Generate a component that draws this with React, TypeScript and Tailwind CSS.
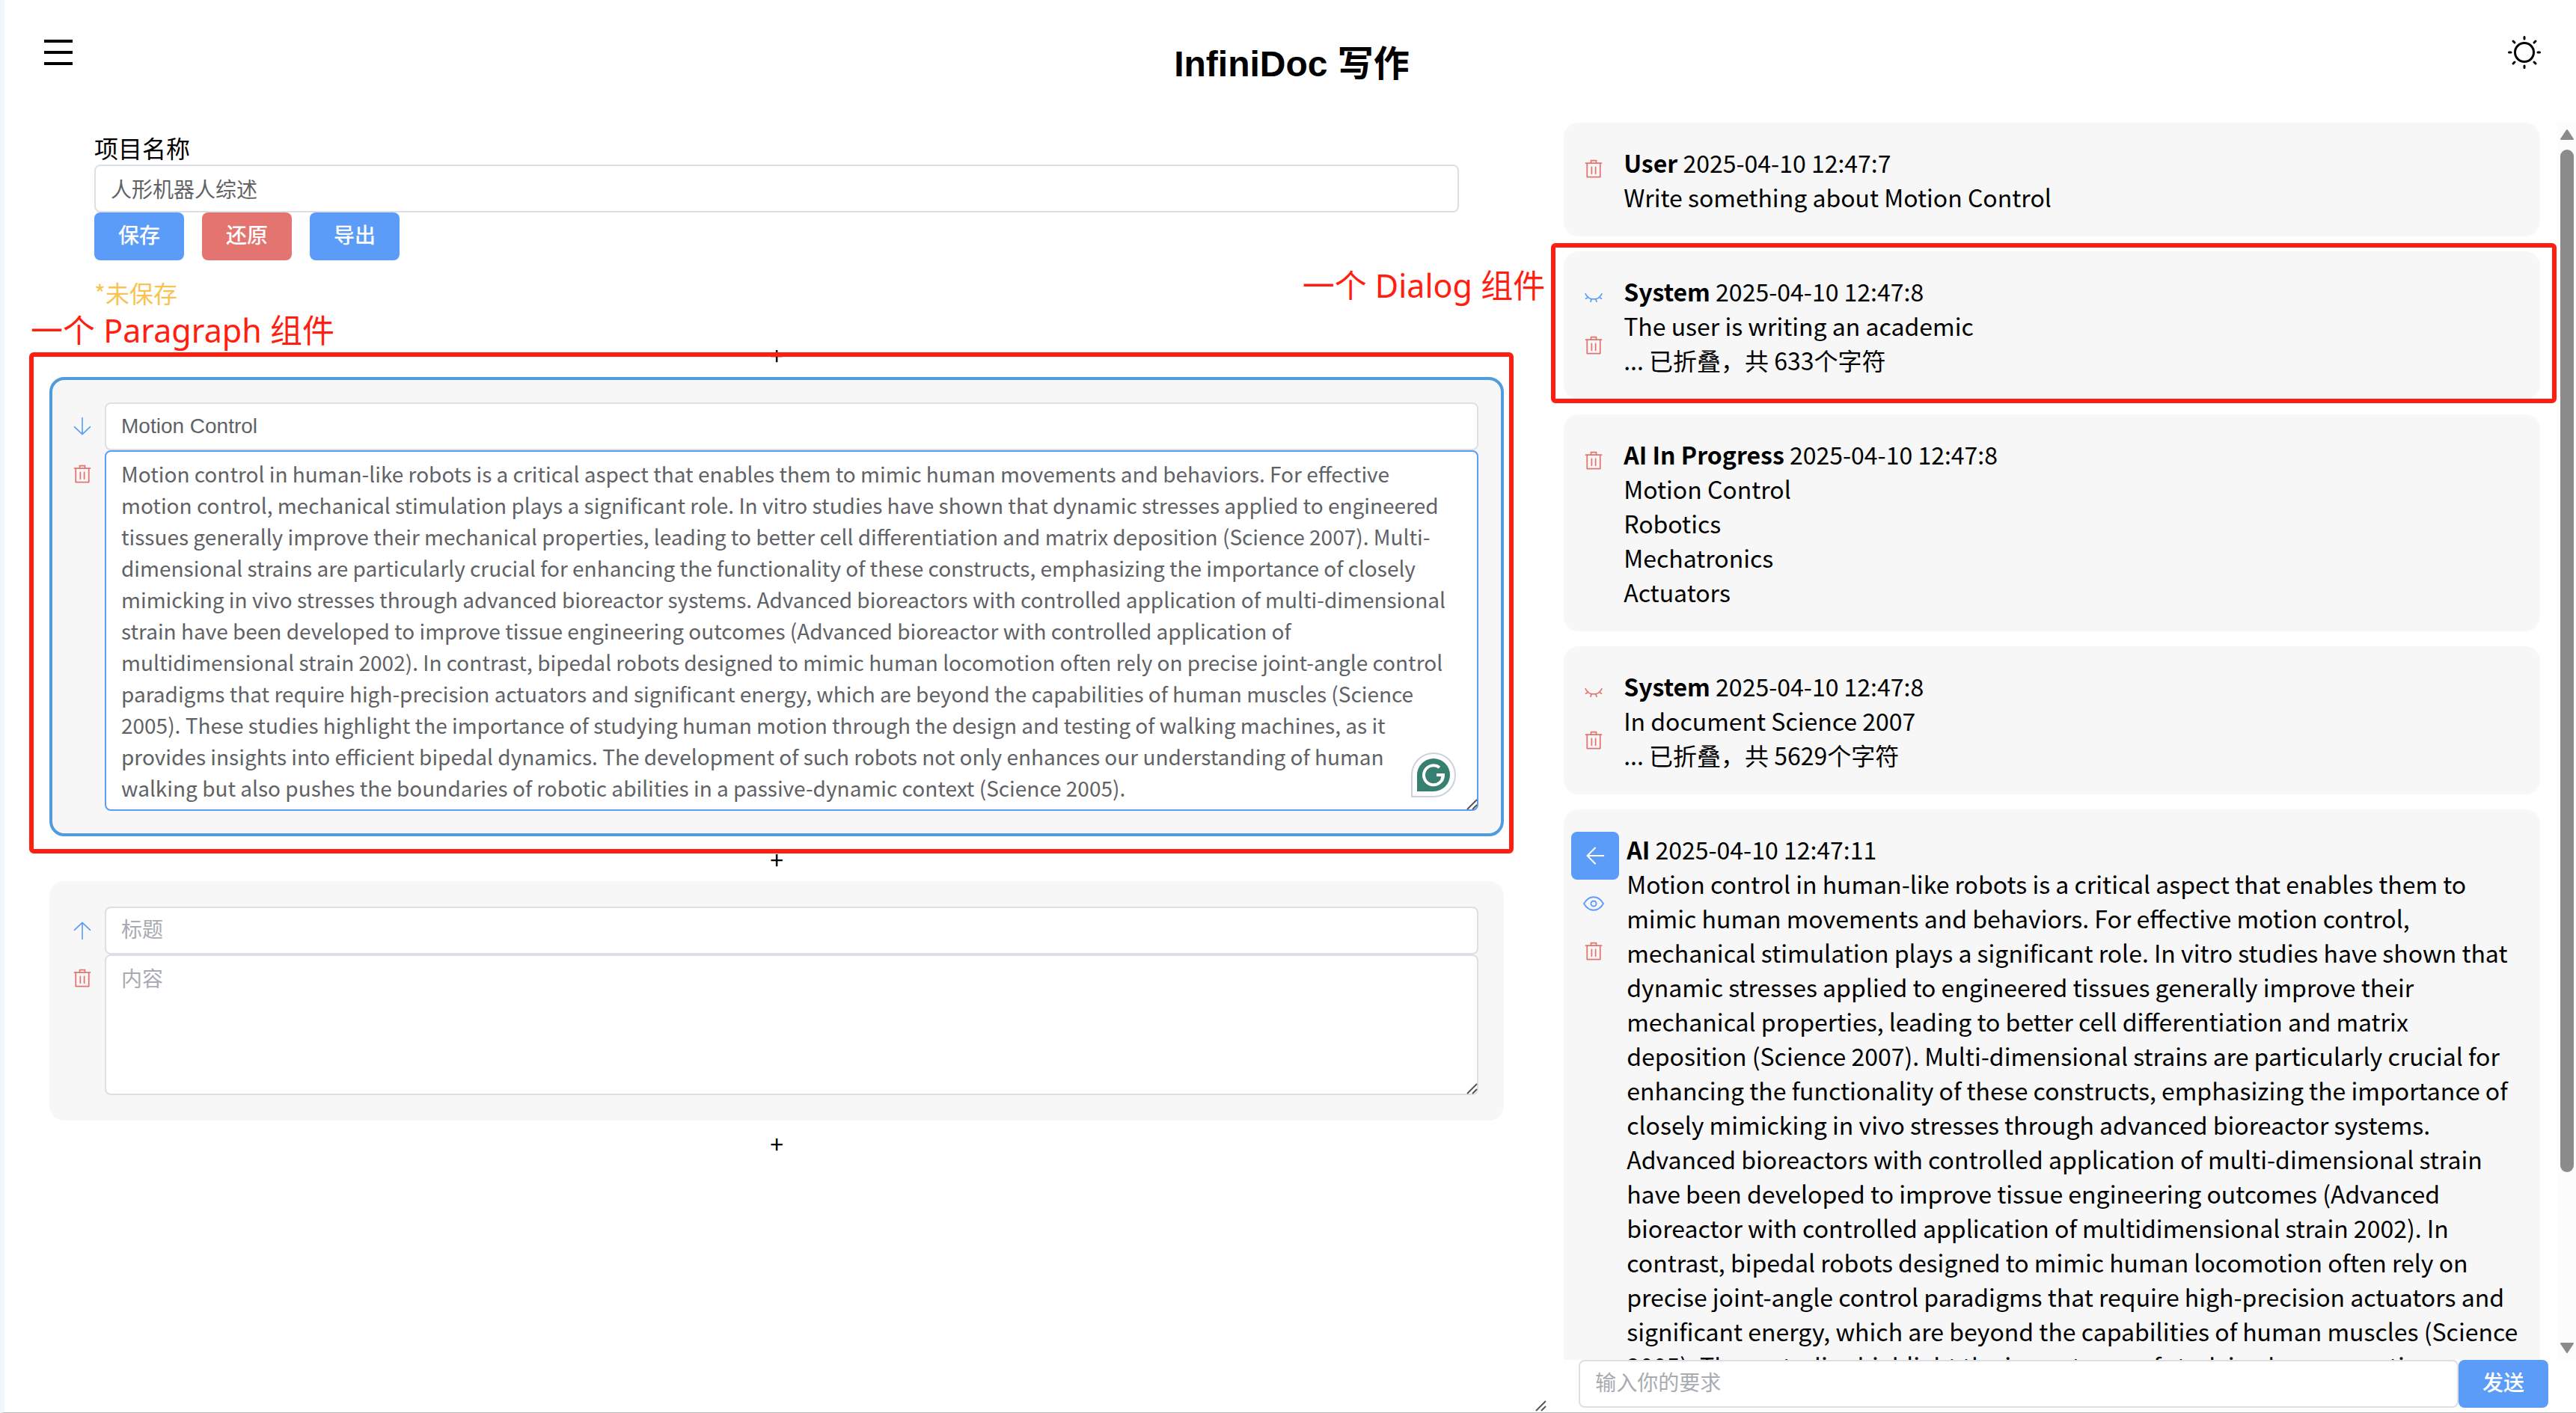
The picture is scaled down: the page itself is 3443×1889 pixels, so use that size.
import type { ReactNode } from "react";

const CONTENT =
  "Motion control in human-like robots is a critical aspect that enables them to mimic human movements and behaviors. For effective motion control, mechanical stimulation plays a significant role. In vitro studies have shown that dynamic stresses applied to engineered tissues generally improve their mechanical properties, leading to better cell differentiation and matrix deposition (Science 2007). Multi-dimensional strains are particularly crucial for enhancing the functionality of these constructs, emphasizing the importance of closely mimicking in vivo stresses through advanced bioreactor systems. Advanced bioreactors with controlled application of multi-dimensional strain have been developed to improve tissue engineering outcomes (Advanced bioreactor with controlled application of multidimensional strain 2002). In contrast, bipedal robots designed to mimic human locomotion often rely on precise joint-angle control paradigms that require high-precision actuators and significant energy, which are beyond the capabilities of human muscles (Science 2005). These studies highlight the importance of studying human motion through the design and testing of walking machines, as it provides insights into efficient bipedal dynamics. The development of such robots not only enhances our understanding of human walking but also pushes the boundaries of robotic abilities in a passive-dynamic context (Science 2005).";

const UI_FONT = "font-['Liberation_Sans','Noto_Sans_CJK_SC',sans-serif]";

function Stroke({ children, width = 64 }: { children: ReactNode; width?: number }) {
  return (
    <svg
      viewBox="0 0 1024 1024"
      className="size-7"
      fill="none"
      stroke="currentColor"
      strokeWidth={width}
      strokeLinecap="round"
      strokeLinejoin="round"
      aria-hidden="true"
    >
      {children}
    </svg>
  );
}

const TrashIcon = () => (
  <Stroke>
    <path d="M128 224H896M192 224V896H832V224M384 224V96H640V224M416 416V736M608 416V736" />
  </Stroke>
);
const DownIcon = () => (
  <Stroke width={60}>
    <path d="M512 96V896M128 532L512 900L896 532" />
  </Stroke>
);
const UpIcon = () => (
  <Stroke width={60}>
    <path d="M512 928V128M128 492L512 124L896 492" />
  </Stroke>
);
const BackIcon = () => (
  <Stroke width={72}>
    <path d="M128 512H928M512 128L128 512L512 896" />
  </Stroke>
);
const ViewIcon = () => (
  <Stroke width={68}>
    <path d="M36 512C150 320 310 192 512 192S874 320 988 512C874 704 714 832 512 832S150 704 36 512Z" />
    <circle cx="512" cy="512" r="130" />
  </Stroke>
);
const HideIcon = () => (
  <Stroke width={64}>
    <path d="M112 320C190 490 330 585 512 585S834 490 912 320M245 480L130 560M779 480L894 560M405 580L365 705M619 580L659 705" />
  </Stroke>
);
const Grip = () => (
  <svg viewBox="0 0 18 18" className="size-[18px]" stroke="#55575b" strokeWidth="2" aria-hidden="true">
    <path d="M3 16L16 3M10 16L16 10" />
  </svg>
);

function IconButton({ label, tone, children }: { label: string; tone: "blue" | "red"; children: ReactNode }) {
  return (
    <button
      type="button"
      aria-label={label}
      className={`flex h-16 w-[60px] items-center justify-center ${tone === "blue" ? "text-[#5a9cf8]" : "text-[#e3746f]"}`}
    >
      {children}
    </button>
  );
}

function Button({ children, danger = false }: { children: ReactNode; danger?: boolean }) {
  return (
    <button
      type="button"
      className={`flex h-16 w-[120px] shrink-0 items-center justify-center rounded-lg text-[28px] font-medium text-white ${danger ? "bg-[#e3746f]" : "bg-[#5a9cf8]"} ${UI_FONT}`}
    >
      {children}
    </button>
  );
}

const FIELD =
  "block w-full rounded-lg border-2 bg-white px-5 text-[28px] text-[#606266] placeholder:text-[#a8abb2] outline-none";

function Plus() {
  return (
    <button type="button" aria-label="添加段落" className="flex h-[60px] w-full items-center justify-center text-[32px] leading-[46px]">
      +
    </button>
  );
}

function Paragraph({
  title,
  content,
  rows,
  active = false,
  children,
}: {
  title: string;
  content: string;
  rows: number;
  active?: boolean;
  children?: ReactNode;
}) {
  return (
    <section className="relative">
      <div
        className={`flex rounded-[20px] border-4 bg-[#f7f7f7] py-[30px] pr-[30px] pl-[10px] ${active ? "border-[#4f9ddd]" : "border-[#f7f7f7]"}`}
      >
        <div className="flex flex-col">
          {active ? (
            <IconButton label="下移" tone="blue">
              <DownIcon />
            </IconButton>
          ) : (
            <IconButton label="上移" tone="blue">
              <UpIcon />
            </IconButton>
          )}
          <IconButton label="删除段落" tone="red">
            <TrashIcon />
          </IconButton>
        </div>
        <div className="min-w-0 grow">
          <input aria-label="标题" placeholder="标题" defaultValue={title} className={`${FIELD} h-16 border-[#dcdfe6] ${UI_FONT}`} />
          <div className="relative">
            <textarea
              aria-label="内容"
              placeholder="内容"
              rows={rows}
              defaultValue={content}
              className={`${FIELD} resize-none overflow-hidden py-2 leading-[42px] ${active ? "border-[#5a9cf8]" : "border-[#dcdfe6]"}`}
            />
            <span className="absolute right-0 bottom-0">
              <Grip />
            </span>
            {active && (
              <svg viewBox="0 0 60 60" className="absolute right-[30px] bottom-[18px] size-[60px]" aria-hidden="true">
                <path d="M1 59V30A29 29 0 1 1 30 59Z" fill="#fff" stroke="#cfd0dc" strokeWidth="2" />
                <path d="M8 52V30A22 22 0 1 1 30 52Z" fill="#377f70" />
                <path d="M38 20A13 13 0 1 0 43 30H34M43 30L41 37" fill="none" stroke="#fff" strokeWidth="4" />
              </svg>
            )}
          </div>
        </div>
      </div>
      {children}
    </section>
  );
}

function Dialog({
  who,
  time,
  lines,
  actions,
  children,
}: {
  who: string;
  time: string;
  lines: string[];
  actions: ReactNode;
  children?: ReactNode;
}) {
  return (
    <article className="relative flex items-start gap-[10px] rounded-[20px] bg-[#f7f7f7] py-[30px] pr-7 pl-[10px]">
      <div className="flex shrink-0 flex-col">{actions}</div>
      <div className="min-w-0">
        <p>
          <b>{who}</b> {time}
        </p>
        {lines.map((line) => (
          <p key={line}>{line}</p>
        ))}
      </div>
      {children}
    </article>
  );
}

const Trash = () => (
  <IconButton label="删除对话" tone="red">
    <TrashIcon />
  </IconButton>
);

export default function App() {
  return (
    <div className="flex h-screen flex-col overflow-hidden border-b border-l-[6px] border-b-[#b8b8b8] border-l-[#f3f7fb] bg-white font-['Noto_Sans_CJK_SC',sans-serif] text-[32px] leading-[46px] text-black">
      <header className="grid h-[164px] shrink-0 grid-cols-[1fr_auto_1fr] items-start pt-12 pl-1">
        <button type="button" aria-label="菜单" className="ml-[46px] flex size-11 items-center justify-center">
          <svg viewBox="0 0 38 34" className="h-[34px] w-[38px]" stroke="#000" strokeWidth="4" aria-hidden="true">
            <path d="M0 2H38M0 17H38M0 32H38" />
          </svg>
        </button>
        <h1 className={`text-[48px] leading-[76px] font-bold ${UI_FONT}`}>InfiniDoc 写作</h1>
        <button type="button" aria-label="切换主题" className="mr-[47px] flex size-11 items-center justify-center justify-self-end">
          <svg viewBox="0 0 44 44" className="size-11" fill="none" stroke="#000" strokeWidth="3" strokeLinecap="round" aria-hidden="true">
            <circle cx="22" cy="22" r="12.5" />
            <path d="M22 1.500V4M22 40V42.500M1.500 22H4M40 22H42.500M7 7L9 9M35 35L37 37M37 7L35 9M9 35L7 37" />
          </svg>
        </button>
      </header>

      <div className="flex min-h-0 grow">
        <main className="relative w-3/5 shrink-0 pr-[58px] pl-[60px]">
          <form className="flex flex-col px-[60px] pt-[10px] pb-[30px]">
            <label htmlFor="project">项目名称</label>
            <input id="project" defaultValue="人形机器人综述" className={`${FIELD} h-16 border-[#dcdfe6] ${UI_FONT}`} />
            <div className="flex gap-6">
              <Button>保存</Button>
              <Button danger>还原</Button>
              <Button>导出</Button>
            </div>
            <p className="mt-5 text-[#f8c350]">*未保存</p>
          </form>
          <Plus />
          <Paragraph title="Motion Control" content={CONTENT} rows={11} active>
            <div className="pointer-events-none absolute -top-[33px] -right-[13px] -bottom-[23px] -left-[27px] rounded-md border-[6px] border-[#ff1e10]">
              <span className="absolute bottom-full -left-1 mb-2 font-['Noto_Sans','Noto_Sans_CJK_SC',sans-serif] text-[43px] leading-[54px] whitespace-nowrap text-[#ff1e10]">
                一个 Paragraph 组件
              </span>
            </div>
          </Paragraph>
          <Plus />
          <Paragraph title="" content="" rows={4} />
          <Plus />
          <span className="absolute right-0 bottom-0">
            <Grip />
          </span>
        </main>

        <aside className="flex min-w-0 grow flex-col pb-[6px]">
          <div className="flex min-h-0 grow">
            <div className="flex min-w-0 grow flex-col gap-5 overflow-y-clip pr-[23px] pl-[22px]">
              <Dialog who="User" time="2025-04-10 12:47:7" lines={["Write something about Motion Control"]} actions={<Trash />} />
              <Dialog
                who="System"
                time="2025-04-10 12:47:8"
                lines={["The user is writing an academic", "... 已折叠，共 633个字符"]}
                actions={
                  <>
                    <IconButton label="展开" tone="blue">
                      <HideIcon />
                    </IconButton>
                    <Trash />
                  </>
                }
              >
                <div className="pointer-events-none absolute -top-[11px] -right-[22px] -bottom-[5px] -left-[17px] rounded-md border-[6px] border-[#ff1e10]">
                  <span className="absolute top-6 right-full mr-[14px] font-['Noto_Sans','Noto_Sans_CJK_SC',sans-serif] text-[43px] leading-[54px] whitespace-nowrap text-[#ff1e10]">
                    一个 Dialog 组件
                  </span>
                </div>
              </Dialog>
              <Dialog
                who="AI In Progress"
                time="2025-04-10 12:47:8"
                lines={["Motion Control", "Robotics", "Mechatronics", "Actuators"]}
                actions={<Trash />}
              />
              <Dialog
                who="System"
                time="2025-04-10 12:47:8"
                lines={["In document Science 2007", "... 已折叠，共 5629个字符"]}
                actions={
                  <>
                    <IconButton label="展开" tone="red">
                      <HideIcon />
                    </IconButton>
                    <Trash />
                  </>
                }
              />
              <Dialog
                who="AI"
                time="2025-04-10 12:47:11"
                lines={[CONTENT]}
                actions={
                  <>
                    <button
                      type="button"
                      aria-label="应用到段落"
                      className="flex size-16 items-center justify-center rounded-lg bg-[#5a9cf8] text-white"
                    >
                      <BackIcon />
                    </button>
                    <IconButton label="折叠" tone="blue">
                      <ViewIcon />
                    </IconButton>
                    <Trash />
                  </>
                }
              />
            </div>
            <div className="flex w-[25px] shrink-0 flex-col items-center bg-[#fcfcfc] py-[9px]" aria-hidden="true">
              <svg viewBox="0 0 18 14" className="h-[14px] w-[18px]">
                <path d="M9 1L17 13H1Z" fill="#8b8b8b" stroke="#8b8b8b" strokeWidth="2" strokeLinejoin="round" />
              </svg>
              <div className="mt-[13px] flex min-h-0 grow flex-col">
                <div className="w-[18px] grow-[6] rounded-full bg-[#8b8b8b]" />
                <div className="grow" />
              </div>
              <svg viewBox="0 0 18 14" className="h-[14px] w-[18px]">
                <path d="M9 13L17 1H1Z" fill="#8b8b8b" stroke="#8b8b8b" strokeWidth="2" strokeLinejoin="round" />
              </svg>
            </div>
          </div>
          <form className="flex shrink-0 pr-[37px] pl-[42px]">
            <input aria-label="输入你的要求" placeholder="输入你的要求" className={`${FIELD} h-16 min-w-0 border-[#dcdfe6] ${UI_FONT}`} />
            <Button>发送</Button>
          </form>
        </aside>
      </div>
    </div>
  );
}
